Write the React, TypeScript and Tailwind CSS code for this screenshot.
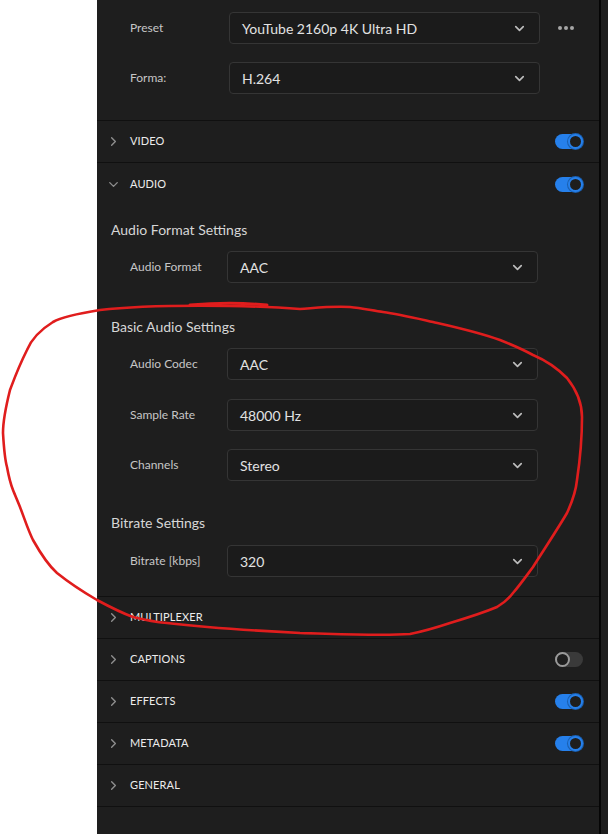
import { ChevronDown, ChevronRight } from 'lucide-react'

const FONT = { fontFamily: 'Lato, "Noto Sans", sans-serif' }

function Select({ value }: { value: string }) {
  return (
    <div className="flex h-[32px] w-[311px] items-center justify-between rounded-[4px] border border-[#353535] bg-[#1b1b1b] pl-[12px] pr-[12px]">
      <span className="text-[14px] text-[#e2e2e2]">{value}</span>
      <ChevronDown size={15} strokeWidth={2.6} className="text-[#bdbdbd]" />
    </div>
  )
}

function Field({ label, value, indent = 'w-[99px]' }: { label: string; value: string; indent?: string }) {
  return (
    <div className="flex items-center pl-[33px]">
      <span className={`${indent} text-[12px] text-[#c6c6c6]`}>{label}</span>
      <Select value={value} />
    </div>
  )
}

function Toggle({ on }: { on: boolean }) {
  if (!on)
    return (
      <div className="relative h-[15px] w-[28px] rounded-full bg-[#3a3a3a]">
        <div className="absolute left-0 top-0 h-[15px] w-[15px] rounded-full border-[2px] border-[#9a9a9a] bg-[#1e1e1e]" />
      </div>
    )
  return (
    <div className="relative h-[15px] w-[28px] rounded-full bg-[#2680eb]">
      <div className="absolute right-0 top-0 h-[15px] w-[15px] rounded-full border-[2px] border-[#2680eb] bg-[#1e1e1e] ring-1 ring-[#1a5fb0]" />
    </div>
  )
}

function Section({ title, toggle, open, border = true }: { title: string; toggle?: boolean; open?: boolean; border?: boolean }) {
  return (
    <div className={`flex h-[42px] items-center justify-between pl-[9px] pr-[16px] ${border ? 'border-b border-[#101010]' : ''}`}>
      <div className="flex items-center">
        {open ? (
          <ChevronDown size={15} strokeWidth={2.2} className="text-[#8e8e8e]" />
        ) : (
          <ChevronRight size={15} strokeWidth={2.2} className="text-[#8e8e8e]" />
        )}
        <span className="ml-[9px] text-[11px] tracking-[0.01em] text-[#ececec]">{title}</span>
      </div>
      {toggle !== undefined && <Toggle on={toggle} />}
    </div>
  )
}

function Heading({ children, className }: { children: string; className: string }) {
  return <div className={`pl-[14px] text-[14px] leading-[20px] text-[#d6d6d6] ${className}`}>{children}</div>
}

export default function App() {
  return (
    <div className="relative flex h-[834px] w-[608px] overflow-hidden bg-white" style={FONT}>
      <div className="w-[97px] bg-white" />
      <div className="w-[502px] bg-[#1e1e1e]">
        {/* preset */}
        <div className="border-b border-[#101010] pb-[26px] pt-[12px]">
          <div className="flex items-center">
            <Field label="Preset" value="YouTube 2160p 4K Ultra HD" />
            <div className="ml-[18px] flex gap-[2px]">
              <span className="h-[4px] w-[4px] rounded-full bg-[#a6a6a6]" />
              <span className="h-[4px] w-[4px] rounded-full bg-[#a6a6a6]" />
              <span className="h-[4px] w-[4px] rounded-full bg-[#a6a6a6]" />
            </div>
          </div>
          <div className="mt-[18px]">
            <Field label="Forma:" value="H.264" />
          </div>
        </div>

        <Section title="VIDEO" toggle={true} />
        <Section title="AUDIO" toggle={true} open border={false} />

        <div className="border-b border-[#101010] pb-[19px]">
          <Heading className="mt-[15px]">Audio Format Settings</Heading>
          <div className="mt-[11px]">
            <Field label="Audio Format" value="AAC" indent="w-[97px]" />
          </div>
          <Heading className="mt-[34px]">Basic Audio Settings</Heading>
          <div className="mt-[11px]">
            <Field label="Audio Codec" value="AAC" indent="w-[97px]" />
          </div>
          <div className="mt-[19px]">
            <Field label="Sample Rate" value="48000 Hz" indent="w-[97px]" />
          </div>
          <div className="mt-[18px]">
            <Field label="Channels" value="Stereo" indent="w-[97px]" />
          </div>
          <Heading className="mt-[32px]">Bitrate Settings</Heading>
          <div className="mt-[12px]">
            <Field label="Bitrate [kbps]" value="320" indent="w-[97px]" />
          </div>
        </div>

        <Section title="MULTIPLEXER" />
        <Section title="CAPTIONS" toggle={false} />
        <Section title="EFFECTS" toggle={true} />
        <Section title="METADATA" toggle={true} />
        <Section title="GENERAL" />
      </div>
      <div className="w-[2px] bg-[#050505]" />
      <div className="flex-1 bg-[#1e1e1e]" />

      {/* hand-drawn annotation */}
      <svg className="pointer-events-none absolute left-0 top-0" width="608" height="834" viewBox="0 0 608 834" fill="none">
        <path
          d="M300 309 C250 305 150 304 100 310 C75 314 60 318 53 322 C40 330 32 338 27 350 C17 370 12 385 10 390 C5 410 3 420 3 433 C4 450 5 460 7 467 C9 478 11 485 13 490 C15 495 18 502 20 507 C25 520 28 530 33 540 C42 556 48 565 57 573 C72 585 85 593 97 600 C110 607 122 613 133 617 C145 620 155 622 167 623 C210 628 260 631 300 633 C340 634 380 636 410 634 C425 631 438 627 450 623 C470 617 485 612 497 607 C505 602 510 597 513 593 C520 585 527 575 533 567 C545 548 557 530 567 513 C573 500 576 490 577 480 C580 460 582 440 582 417 C582 400 575 388 567 378 C557 368 545 360 533 355 C520 348 510 344 500 340 C478 332 455 327 433 322 C415 318 398 314 383 312 C370 310 360 308 350 307 C330 306 315 308 300 309"
          stroke="#e01d1d"
          strokeWidth="2.6"
          strokeLinecap="round"
        />
        <path d="M190 305 C215 303 245 303 267 305" stroke="#e01d1d" strokeWidth="3" strokeLinecap="round" />
      </svg>
    </div>
  )
}
